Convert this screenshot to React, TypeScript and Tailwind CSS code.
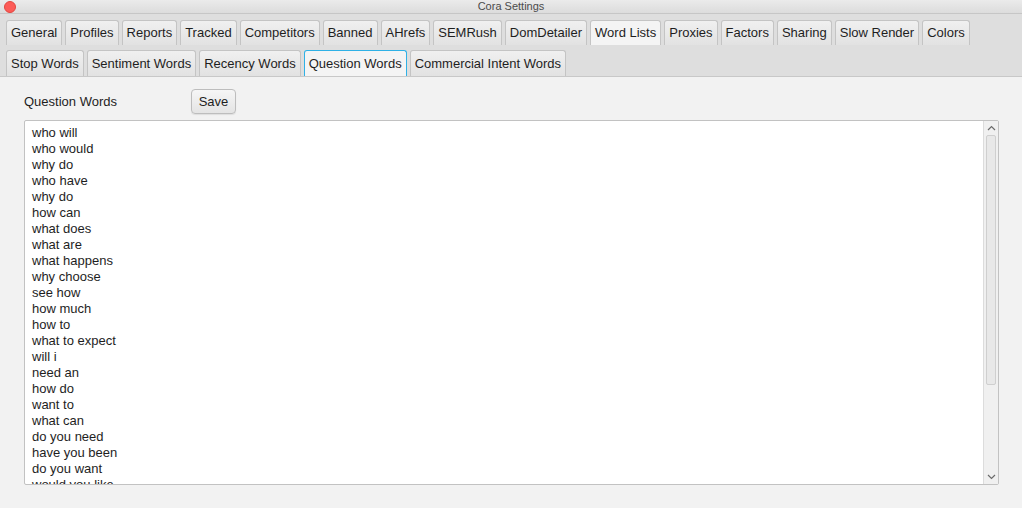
import React from 'react';

const topTabs = [
  'General',
  'Profiles',
  'Reports',
  'Tracked',
  'Competitors',
  'Banned',
  'AHrefs',
  'SEMRush',
  'DomDetailer',
  'Word Lists',
  'Proxies',
  'Factors',
  'Sharing',
  'Slow Render',
  'Colors',
];

const subTabs = ['Stop Words', 'Sentiment Words', 'Recency Words', 'Question Words', 'Commercial Intent Words'];

const words = [
  'who will',
  'who would',
  'why do',
  'who have',
  'why do',
  'how can',
  'what does',
  'what are',
  'what happens',
  'why choose',
  'see how',
  'how much',
  'how to',
  'what to expect',
  'will i',
  'need an',
  'how do',
  'want to',
  'what can',
  'do you need',
  'have you been',
  'do you want',
  'would you like',
];

const Tab: React.FC<{ label: string; active?: boolean; focused?: boolean }> = ({ label, active, focused }) => (
  <div
    className={
      focused
        ? 'h-full px-[4px] flex items-center rounded-t-[3px] border border-b-0 border-[#2fb1e6] bg-[#f4f4f4] text-[#1e1e1e]'
        : active
          ? 'h-full px-[4px] flex items-center rounded-t-[3px] border border-b-0 border-[#c4c4c4] bg-[#f4f4f4] text-[#1e1e1e]'
          : 'h-full px-[4px] flex items-center rounded-t-[3px] border border-b-0 border-[#c4c4c4] bg-gradient-to-b from-[#f0f0f0] to-[#e2e2e2] text-[#1e1e1e]'
    }
  >
    {label}
  </div>
);

export default function App() {
  return (
    <div className="w-[1022px] h-[508px] flex flex-col bg-[#f2f2f2] text-[13px] overflow-hidden" style={{ fontFamily: '"Liberation Sans", Arial, sans-serif' }}>
      {/* title bar */}
      <div className="relative h-[14px] shrink-0 bg-gradient-to-b from-[#ebebeb] to-[#dcdcdc] border-b border-[#c6c6c6] flex items-center justify-center">
        <div className="absolute left-[4px] top-[1px] w-[12px] h-[12px] rounded-full bg-[#fc5b57] border border-[#e2463f]" />
        <span className="text-[11px] leading-none text-[#4b4b4b]">Cora Settings</span>
      </div>

      {/* top tabs */}
      <div className="h-[31px] shrink-0 bg-[#dedede] px-[6px] pt-[6px] flex gap-[3px]">
        {topTabs.map((t) => (
          <Tab key={t} label={t} active={t === 'Word Lists'} />
        ))}
      </div>

      {/* sub tabs */}
      <div className="h-[32px] shrink-0 bg-[#dedede] px-[6px] pt-[5px] flex gap-[3px] border-b border-[#c8c8c8]">
        {subTabs.map((t) => (
          <Tab key={t} label={t} focused={t === 'Question Words'} />
        ))}
      </div>

      {/* content */}
      <div className="flex-1 flex flex-col px-[24px] pt-[12px] min-h-0">
        <div className="flex items-center h-[25px]">
          <span className="w-[167px] text-[#1e1e1e]">Question Words</span>
          <button className="w-[45px] h-[25px] rounded-[4px] border border-[#bdbdbd] bg-gradient-to-b from-[#f6f6f6] to-[#e4e4e4] text-[#1e1e1e] shadow-[0_1px_1px_rgba(0,0,0,0.08)]">
            Save
          </button>
        </div>

        <div className="mt-[6px] w-[975px] h-[365px] flex border border-[#c2c2c2] rounded-[2px] bg-white">
          <div className="flex-1 overflow-hidden pl-[7px] pt-[4px] text-[#1e1e1e] leading-[16px]">
            {words.map((w, i) => (
              <div key={i}>{w}</div>
            ))}
          </div>
          <div className="w-[15px] flex flex-col bg-[#f0f0f0] border-l border-[#dcdcdc]">
            <div className="h-[14px] flex items-center justify-center">
              <svg width="9" height="6" viewBox="0 0 9 6">
                <path d="M1 5 L4.5 1.5 L8 5" fill="none" stroke="#6b6b6b" strokeWidth="1.2" />
              </svg>
            </div>
            <div className="flex-1 px-[2px] pb-[2px]">
              <div className="h-[250px] rounded-[2px] bg-[#e8e8e8] border border-[#cfcfcf]" />
            </div>
            <div className="h-[14px] flex items-center justify-center">
              <svg width="9" height="6" viewBox="0 0 9 6">
                <path d="M1 1 L4.5 4.5 L8 1" fill="none" stroke="#6b6b6b" strokeWidth="1.2" />
              </svg>
            </div>
          </div>
        </div>
      </div>
    </div>
  );
}
